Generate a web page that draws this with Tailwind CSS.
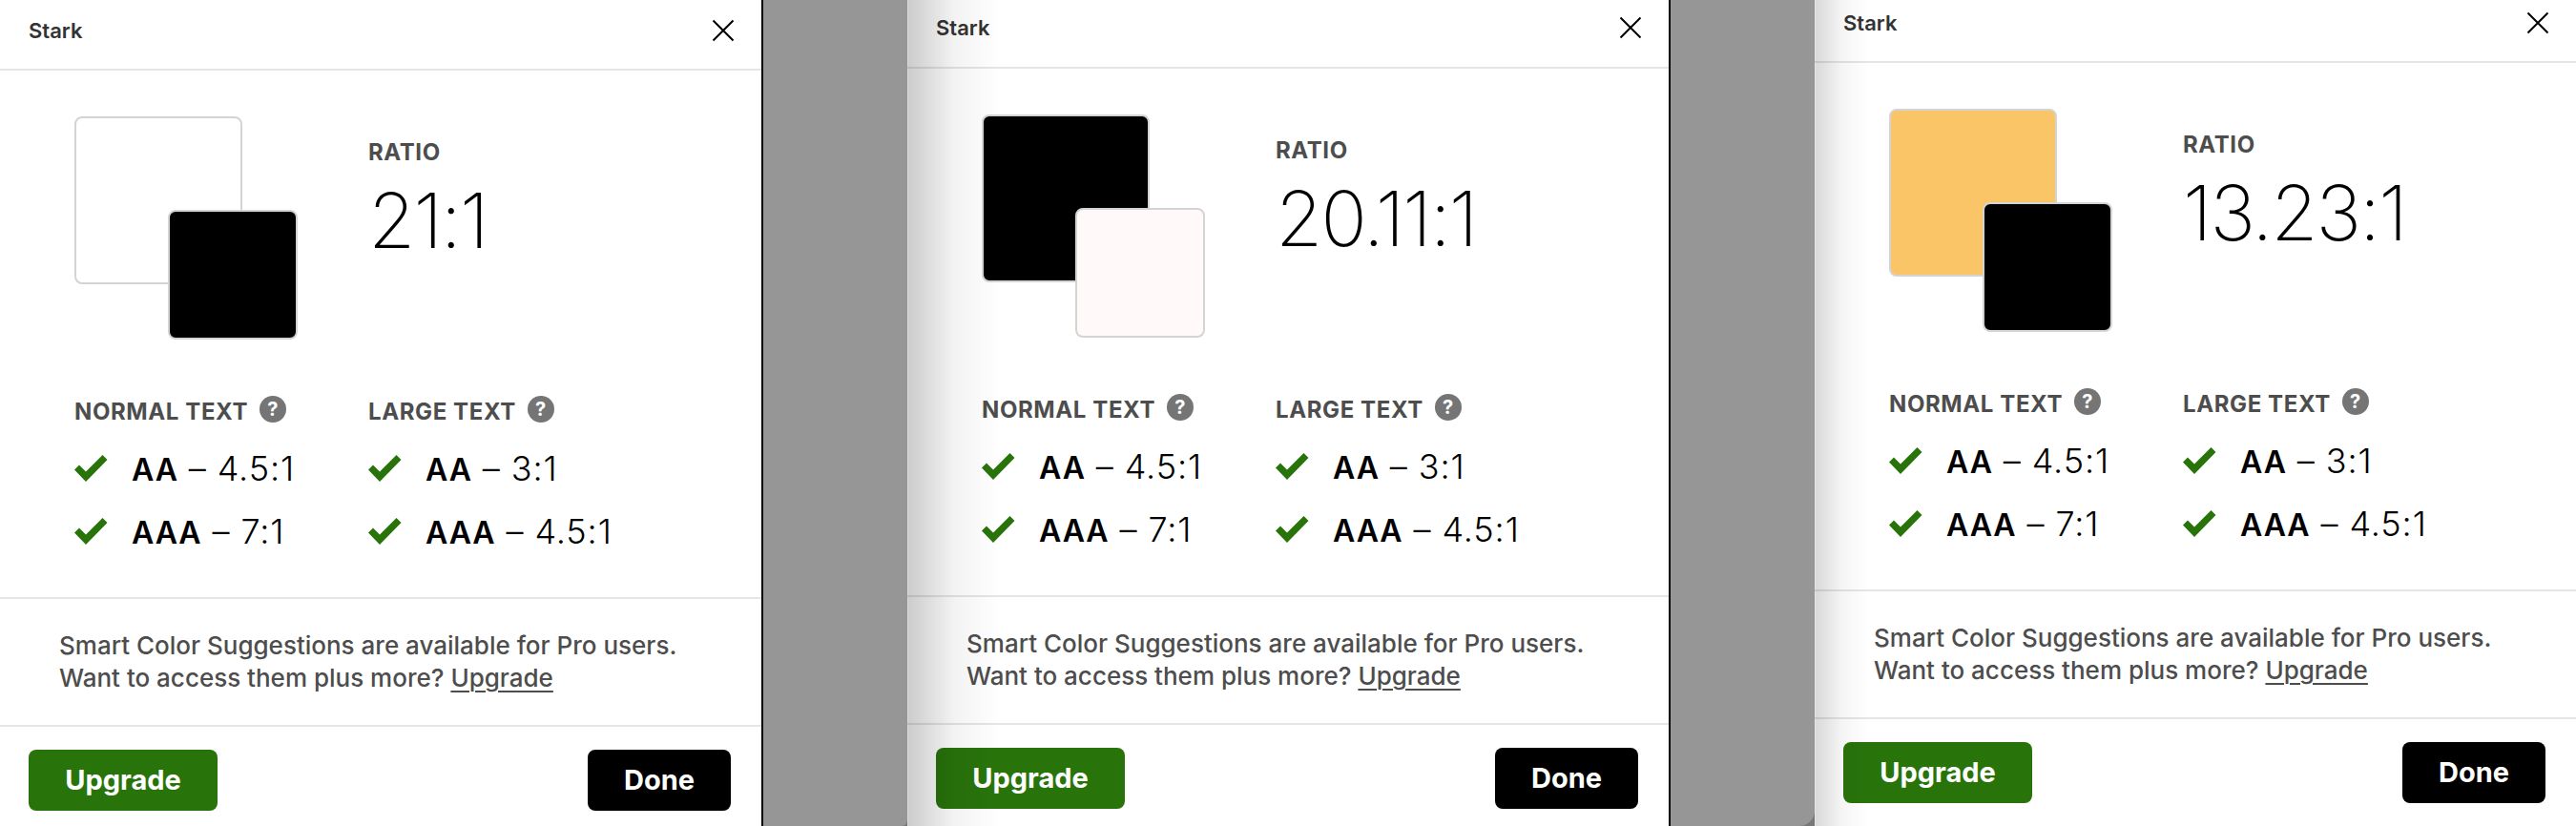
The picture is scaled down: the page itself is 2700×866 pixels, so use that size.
<!DOCTYPE html>
<html lang="en">
<head>
<meta charset="utf-8">
<title>Stark contrast checker</title>
<script src="https://cdn.jsdelivr.net/npm/@tailwindcss/browser@4"></script>
</head>
<body class="h-screen overflow-hidden bg-[#969696] font-[Inter,sans-serif] text-black">
<svg class="hidden" aria-hidden="true">
  <symbol id="check" viewBox="0 0 35 28"><path d="M0 15.500 L5 10.500 L12 17.500 L29.500 0 L34.500 5 L12 28 Z" fill="#28740b"/></symbol>
  <symbol id="close" viewBox="0 0 24 24"><path d="M1.500 1.500 L22.500 22.500 M22.500 1.500 L1.500 22.500" stroke="#000" stroke-width="2" fill="none"/></symbol>
</svg>
<main id="board" class="grid h-full grid-cols-[798fr_2px_151fr_798fr_2px_151fr_798fr]"></main>

<template id="panel">
  <section class="relative flex h-full min-w-0 flex-col bg-white">
    <header class="flex shrink-0 items-center justify-between border-b-2 border-[#e5e5e5] pr-7 pl-[30px]">
      <h2 class="text-[22px] leading-7 font-semibold text-[#333]">Stark</h2>
      <button type="button" aria-label="Close" class="size-6"><svg class="size-6"><use href="#close"/></svg></button>
    </header>
    <div class="grid shrink-0 grid-cols-[308px_1fr] border-b-2 border-[#e5e5e5] pt-12 pb-9 pl-[78px]">
      <div class="relative h-[236px]">
        <div data-big class="size-[176px] rounded-lg border-2 border-[#d4d4d4]"></div>
        <div data-small class="absolute top-[98px] left-[98px] size-[136px] rounded-lg border-2 border-[#d4d4d4]"></div>
      </div>
      <div class="pt-[22px]">
        <h3 class="text-2xl leading-8 font-bold tracking-wide text-[#4d4d4d]">RATIO</h3>
        <p data-ratio class="pt-1.5 text-[80px] leading-[98px] font-extralight tracking-tight"></p>
      </div>
      <div class="pt-[54px]">
        <h3 class="flex h-10 items-center gap-3 text-2xl leading-8 font-bold tracking-wide text-[#4d4d4d]">NORMAL TEXT <button type="button" aria-label="About normal text" class="mb-1.5 size-7 rounded-full bg-[#757575] text-xl leading-7 text-white">?</button></h3>
        <ul class="pt-1.5">
          <li class="flex h-[66px] items-center gap-[25px]"><svg class="h-7 w-[35px]"><use href="#check"/></svg><span class="text-4xl font-light tracking-wide"><b class="text-[32px] font-semibold">AA</b> – 4.5:1</span></li>
          <li class="flex h-[66px] items-center gap-[25px]"><svg class="h-7 w-[35px]"><use href="#check"/></svg><span class="text-4xl font-light tracking-wide"><b class="text-[32px] font-semibold">AAA</b> – 7:1</span></li>
        </ul>
      </div>
      <div class="pt-[54px]">
        <h3 class="flex h-10 items-center gap-3 text-2xl leading-8 font-bold tracking-wide text-[#4d4d4d]">LARGE TEXT <button type="button" aria-label="About large text" class="mb-1.5 size-7 rounded-full bg-[#757575] text-xl leading-7 text-white">?</button></h3>
        <ul class="pt-1.5">
          <li class="flex h-[66px] items-center gap-[25px]"><svg class="h-7 w-[35px]"><use href="#check"/></svg><span class="text-4xl font-light tracking-wide"><b class="text-[32px] font-semibold">AA</b> – 3:1</span></li>
          <li class="flex h-[66px] items-center gap-[25px]"><svg class="h-7 w-[35px]"><use href="#check"/></svg><span class="text-4xl font-light tracking-wide"><b class="text-[32px] font-semibold">AAA</b> – 4.5:1</span></li>
        </ul>
      </div>
    </div>
    <p class="shrink-0 border-b-2 border-[#e5e5e5] py-8 pl-[62px] text-[26px] leading-[34px] font-medium text-[#4d4d4d]">Smart Color Suggestions are available for Pro users.<br>Want to access them plus more? <a href="#upgrade" class="underline decoration-2 underline-offset-4">Upgrade</a></p>
    <footer class="flex justify-between pt-6 pr-8 pl-[30px]">
      <button type="button" class="h-16 w-[198px] rounded-lg bg-[#28740b] text-[29px] font-bold text-white">Upgrade</button>
      <button type="button" class="h-16 w-[150px] rounded-lg bg-black text-[29px] font-bold text-white">Done</button>
    </footer>
    <div data-shade class="pointer-events-none absolute inset-y-0 left-0"></div>
  </section>
</template>

<script>
  const panels = [
    { ratio: '21:1', head: 'h-[74px] pb-2', big: 'bg-white', small: 'bg-black', shade: 'hidden' },
    { ratio: '20.11:1', head: 'h-[72px] pb-3', big: 'bg-black', small: 'bg-[#fff9f9]', shade: 'w-24 bg-linear-to-r from-black/20 via-black/5 to-transparent border-l border-black/15' },
    { ratio: '13.23:1', head: 'h-[66px] pb-4', big: 'bg-[#f9c566]', small: 'bg-black', shade: 'w-14 bg-linear-to-r from-black/15 via-black/4 to-transparent border-l border-black/10' }
  ];
  const corners = ['h-full rounded-br-md bg-[#969696]', 'h-full rounded-br-2xl bg-[#969696]'];
  const board = document.getElementById('board');
  const add = (el, names) => el.classList.add(...names.split(' '));
  panels.forEach((p, i) => {
    const node = document.getElementById('panel').content.cloneNode(true);
    node.querySelector('[data-ratio]').textContent = p.ratio;
    add(node.querySelector('header'), p.head);
    add(node.querySelector('[data-big]'), p.big);
    add(node.querySelector('[data-small]'), p.small);
    add(node.querySelector('[data-shade]'), p.shade);
    board.append(node);
    if (i < 2) {
      const line = document.createElement('div');
      line.className = 'bg-black';
      const gap = document.createElement('div');
      gap.className = 'bg-[#777777]';
      const face = document.createElement('div');
      face.className = corners[i];
      gap.append(face);
      board.append(line, gap);
    }
  });
</script>
</body>
</html>
